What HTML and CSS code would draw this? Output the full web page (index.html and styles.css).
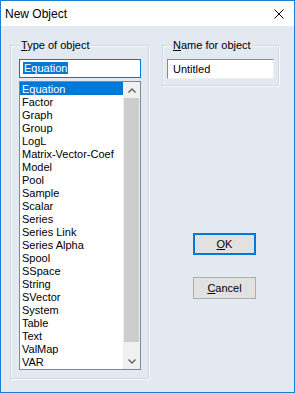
FILE: index.html
```html
<!DOCTYPE html>
<html lang="en">
<head>
  <meta charset="UTF-8" />
  <title>New Object</title>
  <link rel="stylesheet" href="styles.css">
</head>
<body>
  <div class="window">
    <div class="titlebar">
      <span class="title">New Object</span>
      <svg class="close" width="10" height="10" viewBox="0 0 10 10">
        <path d="M0.5 0.5 L9.5 9.5 M9.5 0.5 L0.5 9.5" stroke="#000" stroke-width="1" fill="none"/>
      </svg>
    </div>

    <div class="content">
      <div class="group type-group">
        <span class="group-label"><u>T</u>ype of object</span>
        <div class="combo-edit"><span class="sel">Equation</span></div>
        <div class="listbox">
          <ul class="items">
            <li class="selected">Equation</li>
            <li>Factor</li>
            <li>Graph</li>
            <li>Group</li>
            <li>LogL</li>
            <li>Matrix-Vector-Coef</li>
            <li>Model</li>
            <li>Pool</li>
            <li>Sample</li>
            <li>Scalar</li>
            <li>Series</li>
            <li>Series Link</li>
            <li>Series Alpha</li>
            <li>Spool</li>
            <li>SSpace</li>
            <li>String</li>
            <li>SVector</li>
            <li>System</li>
            <li>Table</li>
            <li>Text</li>
            <li>ValMap</li>
            <li>VAR</li>
          </ul>
          <div class="scrollbar">
            <div class="arrow">
              <svg width="8" height="5" viewBox="0 0 8 5"><path d="M0.5 4.5 L4 1 L7.5 4.5" stroke="#606060" stroke-width="1.4" fill="none"/></svg>
            </div>
            <div class="track"><div class="thumb"></div></div>
            <div class="arrow">
              <svg width="8" height="5" viewBox="0 0 8 5"><path d="M0.5 0.5 L4 4 L7.5 0.5" stroke="#606060" stroke-width="1.4" fill="none"/></svg>
            </div>
          </div>
        </div>
      </div>

      <div class="side">
        <div class="group name-group">
          <span class="group-label"><u>N</u>ame for object</span>
          <div class="text-edit">Untitled</div>
        </div>
        <button class="btn btn-default"><u>O</u>K</button>
        <button class="btn"><u>C</u>ancel</button>
      </div>
    </div>
  </div>
</body>
</html>
```

FILE: styles.css
```css
html, body {
  margin: 0;
  padding: 0;
}
body {
  font-family: "Liberation Sans", Arial, sans-serif;
  font-size: 11px;
  line-height: 13px;
  color: #000;
}
.window {
  width: 295px;
  height: 393px;
  box-sizing: border-box;
  border: 1px solid #1b7fd6;
  background: #e3e9f1;
  display: flex;
  flex-direction: column;
}
.titlebar {
  height: 25px;
  background: #fff;
  display: flex;
  align-items: center;
  justify-content: space-between;
  padding: 0 10px 0 4px;
}
.title {
  font-size: 12px;
  line-height: 14px;
}

.content {
  display: flex;
  padding: 19px 0 0 9px;
}

/* group boxes */
.group {
  position: relative;
  box-sizing: border-box;
  border: 1px solid #d3d9e1;
  box-shadow: inset 1px 1px 0 #f7f9fc, 1px 1px 0 #f7f9fc;
}
.group-label {
  position: absolute;
  top: -7px;
  left: 9px;
  padding: 0 1px;
  background: #e3e9f1;
}
.type-group {
  width: 139px;
  height: 334px;
  padding: 13px 0 0 8px;
}
.name-group {
  width: 117px;
  height: 41px;
  padding: 13px 0 0 4px;
}

.combo-edit {
  box-sizing: border-box;
  width: 122px;
  height: 19px;
  border: 1px solid #0078d7;
  background: #fff;
  padding: 2px 0 0 3px;
}
.sel {
  background: #0078d7;
  color: #fff;
  padding: 0 1px;
}

.listbox {
  box-sizing: border-box;
  width: 122px;
  height: 289px;
  margin-top: 3px;
  border: 1px solid #828790;
  background: #fff;
  display: flex;
}
.items {
  list-style: none;
  margin: 0;
  padding: 0;
  flex: 1;
}
.items li {
  height: 12px;
  padding: 1px 0 0 2px;
  line-height: 13px;
  white-space: nowrap;
  overflow: hidden;
}
.items li.selected {
  background: #0078d7;
  color: #fff;
}

.scrollbar {
  width: 17px;
  background: #f0f0f0;
  display: flex;
  flex-direction: column;
}
.scrollbar .arrow {
  height: 16px;
  display: flex;
  align-items: center;
  justify-content: center;
}
.track {
  flex: 1;
  padding: 0 1px 11px;
}
.thumb {
  height: 100%;
  background: #cdcdcd;
}

/* right column */
.side {
  display: flex;
  flex-direction: column;
  align-items: flex-start;
  margin-left: 13px;
}
.text-edit {
  box-sizing: border-box;
  width: 107px;
  height: 20px;
  background: #fff;
  border: 1px solid;
  border-color: #8c8c8c #f0f0f0 #f0f0f0 #8c8c8c;
  padding: 3px 0 0 5px;
}

.btn {
  box-sizing: border-box;
  width: 63px;
  height: 22px;
  margin-left: 31px;
  background: #e1e1e1;
  border: 1px solid #adadad;
  font-family: inherit;
  font-size: 11px;
  color: #000;
  padding: 0;
}
.btn-default {
  margin-top: 147px;
  margin-bottom: 22px;
  border: 2px solid #0078d7;
}
```
